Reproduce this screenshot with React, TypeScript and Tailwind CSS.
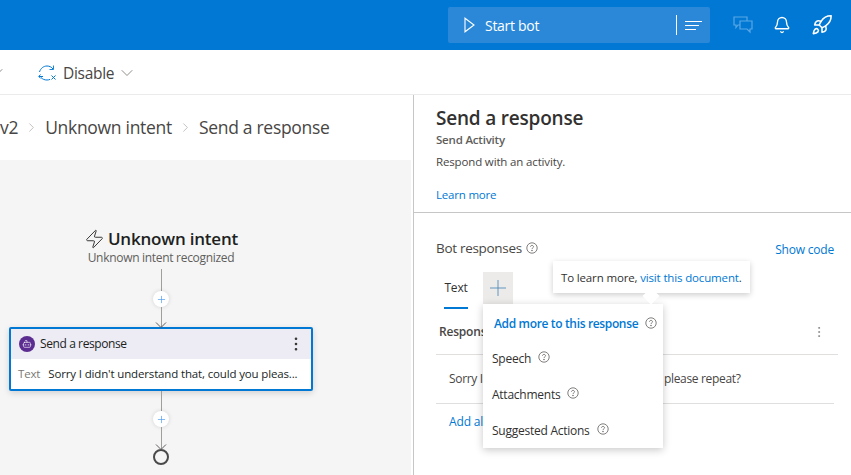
import React from 'react'
import { ChevronDown, ChevronRight, Bell, Rocket, Zap, MoreVertical, Plus, Bot } from 'lucide-react'

function Help({ className = '' }: { className?: string }) {
    return (
        <svg viewBox="0 0 12 12" className={`w-3 h-3 shrink-0 ${className}`} fill="none" stroke="#605e5c" strokeWidth="0.8">
            <circle cx="6" cy="6" r="5.2" />
            <path d="M4.5 4.8C4.5 3.9 5.2 3.4 6 3.4s1.5.5 1.5 1.3c0 1.2-1.5 1.1-1.5 2.4" />
            <circle cx="6" cy="8.6" r="0.35" fill="#605e5c" />
        </svg>
    )
}

function AddNode() {
    return (
        <div className="w-4 h-4 rounded-full bg-white shadow-[0_0_4px_rgba(0,0,0,0.15)] flex items-center justify-center">
            <Plus className="w-[11px] h-[11px] text-[#4f9cf0]" strokeWidth={1.5} />
        </div>
    )
}

function Arrowhead() {
    return (
        <svg viewBox="0 0 14 6" className="w-[14px] h-[6px] block" fill="none" stroke="#605e5c" strokeWidth="1">
            <path d="M2 0.5L7 5.5L12 0.5" />
        </svg>
    )
}

function Flow() {
    return (
        <div className="flex-1 bg-[#f5f5f5] mr-[2px] pl-[9px] pt-[66px]">
            <div className="w-[304px] flex flex-col items-center">
                <div className="flex items-center gap-[3px] h-[26px] -mb-[2px]">
                    <Zap className="w-[21px] h-[22px] text-[#323130]" strokeWidth={1.1} />
                    <span className="text-[17px] font-semibold text-[#201f1e] tracking-[-0.2px]">Unknown intent</span>
                </div>
                <div className="text-[12px] leading-[16px] text-[#605e5c] tracking-[-0.3px]">Unknown intent recognized</div>
                <div className="w-[1px] h-[22px] bg-[#a19f9d] mt-[3px]" />
                <AddNode />
                <div className="w-[1px] h-[20px] bg-[#a19f9d]" />
                <div className="h-0 relative w-full z-10">
                    <div className="absolute left-[145px] -top-[5px]"><Arrowhead /></div>
                </div>
                <div className="w-full h-[64px] border-2 border-[#0078d4] rounded-[2px] bg-white shadow-[0_2px_6px_rgba(0,0,0,0.15)]">
                    <div className="h-[30px] bg-[#edebf3] flex items-center pl-[8px] pr-[6px]">
                        <div className="w-4 h-4 rounded-full bg-[#5c2d91] flex items-center justify-center">
                            <Bot className="w-[10px] h-[10px] text-white" strokeWidth={1.5} />
                        </div>
                        <span className="ml-[5px] text-[12px] text-[#201f1e] tracking-[-0.4px]">Send a response</span>
                        <MoreVertical className="ml-auto w-[18px] h-[18px] text-[#323130]" strokeWidth={1.5} />
                    </div>
                    <div className="h-[30px] flex items-center pl-[7px] text-[11.5px] whitespace-nowrap overflow-hidden tracking-[-0.15px]">
                        <span className="text-[#797775]">Text</span>
                        <span className="ml-[8px] text-[#201f1e]">Sorry I didn't understand that, could you pleas...</span>
                    </div>
                </div>
                <div className="w-[1px] h-[20px] bg-[#a19f9d]" />
                <AddNode />
                <div className="w-[1px] h-[22px] bg-[#a19f9d]" />
                <div className="h-0 relative w-full z-10">
                    <div className="absolute left-[145px] -top-[5px]"><Arrowhead /></div>
                </div>
                <div className="w-4 h-4 rounded-full border-2 border-[#4a4a4a]" />
            </div>
        </div>
    )
}

function AddMorePopover() {
    const items = ['Speech', 'Attachments', 'Suggested Actions']
    return (
        <div className="absolute left-0 top-[32px] w-[180px] h-[144px] bg-white shadow-[0_2px_8px_rgba(0,0,0,0.22)] z-20">
            <div className="flex items-center h-[36px] pl-[11px] pt-[4px] gap-[7px]">
                <span className="text-[12px] font-semibold text-[#0078d4] whitespace-nowrap tracking-[-0.35px]">Add more to this response</span>
                <Help className="-mt-[3px]" />
            </div>
            {items.map((item) => (
                <div key={item} className="flex items-center h-[36px] pl-[9px] gap-[7px] text-[12px] text-[#323130] tracking-[-0.25px] relative top-[1px]">
                    <span>{item}</span>
                    <Help className="-mt-[4px]" />
                </div>
            ))}
        </div>
    )
}

function LearnMoreTooltip() {
    return (
        <div className="absolute left-[70px] -top-[11px] w-[197px] h-[32px] bg-white shadow-[0_2px_6px_rgba(0,0,0,0.2)] z-30 flex items-center pl-[8px] pt-[2px] text-[11.5px] text-[#323130] whitespace-nowrap tracking-[-0.15px]">
            <span>To learn more,&nbsp;</span>
            <span className="text-[#0078d4]">visit this document</span>
            <span>.</span>
            <div className="absolute left-[92px] top-[29px] w-[12px] h-[12px] bg-white rotate-45" />
        </div>
    )
}

export default function App() {
    return (
        <div className="w-[851px] h-[475px] overflow-hidden bg-white flex flex-col font-['Open_Sans',sans-serif] text-[#323130]">
            {/* Top bar */}
            <div className="h-[50px] shrink-0 bg-[#0078d4] flex items-center justify-end pr-[18px]">
                <div className="w-[262px] h-[36px] bg-[#2b88d8] rounded-[2px] flex items-center pl-[16px]">
                    <svg viewBox="0 0 11 16" className="w-[11px] h-[16px]" fill="none" stroke="white" strokeWidth="1.1">
                        <path d="M1 1.2L10 8L1 14.8z" />
                    </svg>
                    <span className="ml-[10px] text-[14px] text-white tracking-[-0.3px]">Start bot</span>
                    <div className="ml-auto w-[1px] h-[20px] bg-white" />
                    <div className="w-[33px] flex flex-col items-start gap-[3px] pl-[8px]">
                        <div className="w-[17px] h-[1px] bg-white" />
                        <div className="w-[14px] h-[1px] bg-white" />
                        <div className="w-[11px] h-[1px] bg-white" />
                    </div>
                </div>
                <svg viewBox="0 0 20 18" className="ml-[23px] w-[20px] h-[18px]" fill="none" stroke="#5aa7e6" strokeWidth="1.2">
                    <path d="M1 1h13v8H5l-2 2.5V9H1z" />
                    <path d="M7 5h12v8h-2v3l-3-3H7z" fill="#0078d4" />
                </svg>
                <Bell className="ml-[20px] w-[18px] h-[18px] text-white" strokeWidth={1.8} />
                <Rocket className="ml-[20px] w-[22px] h-[22px] text-white" strokeWidth={1.7} />
            </div>

            {/* Toolbar */}
            <div className="h-[45px] shrink-0 border-b border-[#edebe9] flex items-center pl-[38px] relative">
                <ChevronDown className="absolute -left-[13px] top-[12px] w-[20px] h-[20px] text-[#797775]" strokeWidth={1} />
                <svg viewBox="0 0 18 16" className="w-[18px] h-[16px] mt-[1px]" fill="none" stroke="#0078d4" strokeWidth="1">
                    <path d="M1.5 7C2.5 3.5 5.5 1 9 1c2.5 0 4.5 1 6 3" />
                    <path d="M11.5 4.5h4v-4" strokeWidth="0.9" />
                    <path d="M1 11.5h4" />
                    <path d="M2.5 9.5L0.8 11.5l2 2" />
                    <path d="M3 12.5C4.5 14.2 6.5 15 9 15c1 0 2-.2 3-.6" />
                    <path d="M13.5 10.5l4 4M17.5 10.5l-4 4" />
                </svg>
                <span className="ml-[7px] mt-[3px] text-[15.5px] text-[#484644] tracking-[-0.3px]">Disable</span>
                <ChevronDown className="ml-[3px] mt-[1px] w-[20px] h-[20px] text-[#797775]" strokeWidth={1} />
            </div>

            <div className="flex-1 flex min-h-0">
                {/* Left pane */}
                <div className="w-[414px] shrink-0 border-r border-[#c8c6c4] flex flex-col overflow-hidden">
                    <div className="h-[65px] shrink-0 flex items-center text-[17.5px] text-[#484644] whitespace-nowrap tracking-[-0.3px]">
                        <span>v2</span>
                        <ChevronRight className="mx-[6px] w-[15px] h-[15px] text-[#a19f9d]" strokeWidth={1} />
                        <span>Unknown intent</span>
                        <ChevronRight className="mx-[6px] w-[15px] h-[15px] text-[#a19f9d]" strokeWidth={1} />
                        <span>Send a response</span>
                    </div>
                    <Flow />
                </div>

                {/* Right pane */}
                <div className="flex-1 flex flex-col min-w-0">
                    <div className="h-[118px] shrink-0 border-b border-[#c8c6c4] pl-[22px] pt-[10px]">
                        <div className="text-[19px] leading-[26px] font-semibold text-[#323130] tracking-[-0.2px]">Send a response</div>
                        <div className="text-[11.5px] leading-[16px] mt-[1px] font-semibold text-[#605e5c] tracking-[-0.2px]">Send Activity</div>
                        <div className="text-[11.5px] leading-[16px] mt-[6px] text-[#484644] tracking-[-0.15px]">Respond with an activity.</div>
                        <div className="text-[11.5px] leading-[16px] mt-[17px] text-[#0078d4] tracking-[-0.2px]">Learn more</div>
                    </div>
                    <div className="pl-[22px] pr-[13px]">
                        <div className="flex items-center h-[20px] mt-[25px]">
                            <span className="text-[13.5px] text-[#484644] tracking-[-0.3px]">Bot responses</span>
                            <Help className="ml-[4px]" />
                            <span className="ml-auto mr-[4px] mt-[4px] text-[12px] text-[#0078d4] tracking-[-0.2px]">Show code</span>
                        </div>
                        <div className="relative flex mt-[14px] h-[34px]">
                            <div className="w-[24px] ml-[8px] border-b-2 border-[#0078d4] text-[12px] font-medium text-[#323130] text-center pt-[7px] h-[37px] tracking-[-0.2px]">Text</div>
                            <div className="relative ml-[15px] w-[30px] h-[32px] bg-[#edebe9] flex items-center justify-center">
                                <Plus className="w-[26px] h-[26px] text-[#4a86b8]" strokeWidth={0.8} />
                                <AddMorePopover />
                                <LearnMoreTooltip />
                            </div>
                        </div>
                        <div className="flex items-center h-[47px] mt-[2px] border-b border-[#e1dfdd] w-[402px] pl-[3px] pt-[2px]">
                            <span className="text-[12px] font-semibold text-[#484644] tracking-[-0.2px]">Response</span>
                            <MoreVertical className="ml-auto mr-[12px] w-[14px] h-[14px] text-[#797775]" strokeWidth={1.2} />
                        </div>
                        <div className="flex items-center h-[49px] border-b border-[#e1dfdd] w-[398px] pl-[13px] text-[12px] text-[#484644] tracking-[-0.33px] whitespace-nowrap">
                            <span>Sorry I didn't understand that, could you please repeat?</span>
                        </div>
                        <div className="pl-[13px] mt-[9px] text-[12px] text-[#0078d4] tracking-[-0.15px]">Add alternative</div>
                    </div>
                </div>
            </div>
        </div>
    )
}
